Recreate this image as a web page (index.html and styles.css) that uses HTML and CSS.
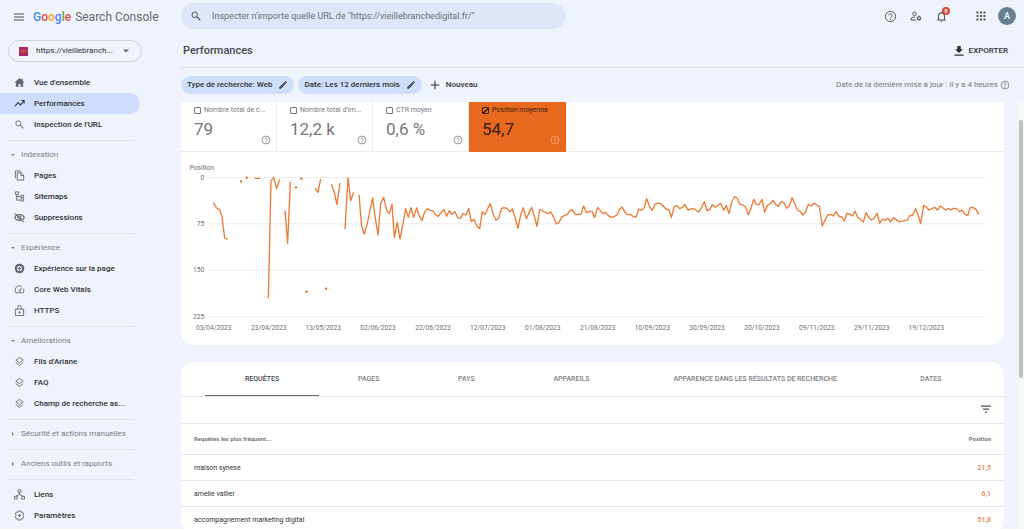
FILE: index.html
```html
<!DOCTYPE html>
<html lang="fr">
<head>
<meta charset="utf-8">
<title>Performances - Google Search Console</title>
<link rel="stylesheet" href="styles.css">
</head>
<body>
<svg class="defs" aria-hidden="true">
  <symbol id="help" viewBox="0 0 24 24"><circle cx="12" cy="12" r="9.5" fill="none" stroke="currentColor" stroke-width="1.8"/><path d="M9 10a3 3 0 1 1 4.6 2.500C12.500 13.300 12 13.800 12 15" fill="none" stroke="currentColor" stroke-width="1.8"/><circle cx="12" cy="17.500" r="1.200" fill="currentColor"/></symbol>
  <symbol id="search" viewBox="0 0 24 24"><circle cx="9.500" cy="9.500" r="5.500" fill="none" stroke="currentColor" stroke-width="2"/><path d="M14 14l6.500 6.500" stroke="currentColor" stroke-width="2.200"/></symbol>
  <symbol id="layers" viewBox="0 0 24 24"><path d="M12 3l8 6-8 6-8-6zM4 14.500l8 6 8-6" fill="none" stroke="currentColor" stroke-width="2"/></symbol>
  <symbol id="pencil" viewBox="0 0 24 24"><path fill="currentColor" d="M3 17.250V21h3.750L17.810 9.940l-3.750-3.750zM20.710 7.040a1 1 0 0 0 0-1.410l-2.340-2.340a1 1 0 0 0-1.410 0l-1.830 1.830 3.750 3.750z"/><path d="M6 18L15.500 8.500" stroke="#cfdefa" stroke-width="1"/></symbol>
</svg>

<div class="app">
  <header class="topbar">
    <div class="brand">
      <button class="icon-btn" aria-label="Menu"><svg class="i12" viewBox="0 0 24 24"><path d="M2 6h20M2 12h20M2 18h20" stroke="currentColor" stroke-width="2.200"/></svg></button>
      <a class="logo" href="#"><span class="google"><b class="c-blue">G</b><b class="c-red">o</b><b class="c-yellow">o</b><b class="c-blue">g</b><b class="c-green">l</b><b class="c-red">e</b></span><span>Search Console</span></a>
    </div>
    <div class="searchbox">
      <svg class="i12"><use href="#search"/></svg>
      <input type="text" aria-label="Inspecter une URL" placeholder='Inspecter n&#39;importe quelle URL de "https://vieillebranchedigital.fr/"'>
    </div>
    <div class="tools">
      <button class="icon-btn" aria-label="Aide"><svg class="i13"><use href="#help"/></svg></button>
      <button class="icon-btn" aria-label="Utilisateurs"><svg class="i12" viewBox="0 0 24 24" fill="none" stroke="currentColor" stroke-width="2"><circle cx="9" cy="7.500" r="3.500"/><path d="M12 20H2v-2c0-2.500 4-4 8-4"/><circle cx="18" cy="16.500" r="3" stroke-width="2.400"/><path d="M18 11.500v2M18 19.500v2M13.700 14l1.700 1M20.600 18l1.700 1M13.700 19l1.700-1M20.600 15l1.700-1"/></svg></button>
      <button class="icon-btn bell" aria-label="Notifications"><svg class="i13" viewBox="0 0 24 24"><path d="M4 18.500h16M6.500 18V11a5.500 5.500 0 0 1 11 0v7M12 3v2.500" fill="none" stroke="currentColor" stroke-width="2"/><path d="M10 20h4a2 2 0 0 1-4 0z" fill="currentColor"/></svg><span class="badge">8</span></button>
      <button class="icon-btn apps" aria-label="Applications"><svg class="i12" viewBox="0 0 24 24" fill="currentColor"><path d="M3 3h4v4H3zM10 3h4v4h-4zM17 3h4v4h-4zM3 10h4v4H3zM10 10h4v4h-4zM17 10h4v4h-4zM3 17h4v4H3zM10 17h4v4h-4zM17 17h4v4h-4z"/></svg></button>
      <button class="avatar" aria-label="Compte">A</button>
    </div>
  </header>

  <nav class="sidebar">
    <button class="property"><svg class="favicon" viewBox="0 0 24 24"><path d="M0 0h24v24H0z" fill="#fff"/><path d="M2 2h20v20H2z" fill="#a62a68"/><path d="M5 12l4-4 3 2 3-2 4 4-4 4-3-2-3 2z" fill="#e9722c"/><path d="M8 11h3v3H8zM13 11h3v3h-3z" fill="#5c1737"/></svg><span>https://vieillebranch...</span><svg class="i12" viewBox="0 0 24 24"><path d="M6 9h12l-6 6z" fill="currentColor"/></svg></button>
    <div class="group first">
      <a class="item" href="#"><svg class="i11" viewBox="0 0 24 24" fill="currentColor"><path d="M12 2L1 12h3v9h6v-6h4v6h6v-9h3l-4-3.600V4h-3v2z"/></svg>Vue d'ensemble</a>
      <a class="item active" href="#"><svg class="i11" viewBox="0 0 24 24"><path d="M2 18l7-8 5 5 8-9M16 5.500h6V12" fill="none" stroke="currentColor" stroke-width="2.400"/></svg>Performances</a>
      <a class="item" href="#"><svg class="i11"><use href="#search"/></svg>Inspection de l'URL</a>
    </div>
    <section class="group">
      <button class="heading"><svg viewBox="0 0 8 8"><path d="M0 2h8L4 6z" fill="currentColor"/></svg>Indexation</button>
      <a class="item" href="#"><svg class="i11" viewBox="0 0 24 24" fill="none" stroke="currentColor" stroke-width="2"><path d="M15 2H3v16M7 6h9l5 5v11H7zM15 6v6h6"/></svg>Pages</a>
      <a class="item" href="#"><svg class="i11" viewBox="0 0 24 24" fill="none" stroke="currentColor" stroke-width="2"><path d="M3 2h7v6H3zM15 9h6v5h-6zM15 17h6v5h-6zM6 8v12h9M6 12h9"/></svg>Sitemaps</a>
      <a class="item" href="#"><svg class="i11" viewBox="0 0 24 24" fill="none" stroke="currentColor" stroke-width="2.200"><path d="M1.500 12C5 3.500 19 3.500 22.500 12 19 20.500 5 20.500 1.500 12zM2 3l19 19"/><circle cx="12" cy="12" r="3.500"/></svg>Suppressions</a>
    </section>
    <section class="group">
      <button class="heading"><svg viewBox="0 0 8 8"><path d="M0 2h8L4 6z" fill="currentColor"/></svg>Expérience</button>
      <a class="item" href="#"><svg class="i11" viewBox="0 0 24 24"><circle cx="12" cy="12" r="8" fill="none" stroke="currentColor" stroke-width="5"/><path d="M12 8v8M8 12h8" stroke="currentColor" stroke-width="2"/></svg>Expérience sur la page</a>
      <a class="item" href="#"><svg class="i11" viewBox="0 0 24 24" fill="none" stroke="currentColor" stroke-width="2"><path d="M16 5A9.500 9.500 0 0 0 4 19h16a9.500 9.500 0 0 0 1-9"/><path d="M10 15l9-9-6 11z" fill="currentColor" stroke="none"/></svg>Core Web Vitals</a>
      <a class="item" href="#"><svg class="i11" viewBox="0 0 24 24" fill="none" stroke="currentColor" stroke-width="2"><path d="M3 9h18v14H3zM8 9V5a4 4 0 0 1 8 0v4"/><circle cx="12" cy="16" r="1.500" fill="currentColor"/></svg>HTTPS</a>
    </section>
    <section class="group">
      <button class="heading"><svg viewBox="0 0 8 8"><path d="M0 2h8L4 6z" fill="currentColor"/></svg>Améliorations</button>
      <a class="item" href="#"><svg class="i11"><use href="#layers"/></svg>Fils d'Ariane</a>
      <a class="item" href="#"><svg class="i11"><use href="#layers"/></svg>FAQ</a>
      <a class="item" href="#"><svg class="i11"><use href="#layers"/></svg>Champ de recherche as...</a>
    </section>
    <section class="group"><button class="heading"><svg viewBox="0 0 8 8"><path d="M2 0v8l4-4z" fill="currentColor"/></svg>Sécurité et actions manuelles</button></section>
    <section class="group"><button class="heading"><svg viewBox="0 0 8 8"><path d="M2 0v8l4-4z" fill="currentColor"/></svg>Anciens outils et rapports</button></section>
    <div class="group">
      <a class="item" href="#"><svg class="i11" viewBox="0 0 24 24" fill="none" stroke="currentColor" stroke-width="2"><path d="M9 2h6v6H9zM1 16h6v6H1zM17 16h6v6h-6zM12 8v5M4 16l8-4 8 4"/></svg>Liens</a>
      <a class="item" href="#"><svg class="i11" viewBox="0 0 24 24" fill="none" stroke="currentColor" stroke-width="2"><path d="M9.500 2h5l1 3 3-.7 2.700 4.400L19 12l2.200 3.300-2.700 4.400-3-.7-1 3h-5l-1-3-3 .7-2.700-4.400L5 12 2.800 8.700l2.700-4.400 3 .7z"/><circle cx="12" cy="12" r="2" fill="currentColor"/></svg>Paramètres</a>
    </div>
  </nav>

  <main class="main">
    <div class="titlebar">
      <h1>Performances</h1>
      <button class="export"><svg class="i12" viewBox="0 0 24 24"><path d="M8.500 2h7v6.500H20L12 16 4 8.500h4.500zM3 19h18v2.500H3z" fill="currentColor"/></svg>EXPORTER</button>
    </div>
    <div class="filters">
      <button class="chip">Type de recherche: Web<svg class="i10"><use href="#pencil"/></svg></button>
      <button class="chip">Date: Les 12 derniers mois<svg class="i10"><use href="#pencil"/></svg></button>
      <button class="new"><svg class="i10" viewBox="0 0 24 24"><path d="M12 2v20M2 12h20" stroke="currentColor" stroke-width="2.500"/></svg>Nouveau</button>
      <p class="updated">Date de la dernière mise à jour : il y a 4 heures<svg class="i10"><use href="#help"/></svg></p>
    </div>
    <div class="scroll">
      <div class="content">
        <section class="card report">
          <div class="metrics">
            <label class="metric"><span class="name"><input type="checkbox">Nombre total de c...</span><span class="value">79</span><svg class="i10"><use href="#help"/></svg></label>
            <label class="metric"><span class="name"><input type="checkbox">Nombre total d'im...</span><span class="value">12,2 k</span><svg class="i10"><use href="#help"/></svg></label>
            <label class="metric"><span class="name"><input type="checkbox">CTR moyen</span><span class="value">0,6 %</span><svg class="i10"><use href="#help"/></svg></label>
            <label class="metric on"><span class="name"><input type="checkbox" checked>Position moyenne</span><span class="value">54,7</span><svg class="i10"><use href="#help"/></svg></label>
          </div>
          <svg class="chart" viewBox="3 -9 2469 579" role="img" aria-label="Position moyenne par jour">
            <path class="grid" d="M82 67.500H2415M82 206.500H2415M82 345.500H2415M82 484.500H2415"/>
            <g class="ylab"><text class="axis" x="29" y="46">Position</text><text x="73" y="74">0</text><text x="73" y="213">75</text><text x="73" y="352">150</text><text x="73" y="491">225</text></g>
            <g class="xlab"><text x="101" y="525">03/04/2023</text><text x="266" y="525">23/04/2023</text><text x="430" y="525">13/05/2023</text><text x="594" y="525">02/06/2023</text><text x="759" y="525">22/06/2023</text><text x="923" y="525">12/07/2023</text><text x="1088" y="525">01/08/2023</text><text x="1253" y="525">21/08/2023</text><text x="1417" y="525">10/09/2023</text><text x="1581" y="525">30/09/2023</text><text x="1746" y="525">20/10/2023</text><text x="1910" y="525">09/11/2023</text><text x="2075" y="525">29/11/2023</text><text x="2239" y="525">19/12/2023</text></g>
            <path class="line" d="M100 142 109 159 118 163 126 184 134 249 143 253M224 70H241M265 430 273 77 281 68 290 101 299 73M315 166 323 265 331 80M405 100 414 112 422 72M454 88 463 112 471 149 480 84M495 223 504 68 512 137 521 112M537 119 545 214 553 237 562 205 570 167 578 129 586 190 594 240 602 147 611 127 620 166 628 176 636 148 643 248 652 202 660 252 669 207 677 161 685 187 693 158 701 187 710 159 718 183 726 197 734 171 742 161 750 166 759 167 767 180 775 184 783 173 792 163 800 184 808 167 816 178 825 170 833 188 841 190 849 176 858 180 866 160 874 200 882 193 890 212 899 221 907 170 915 179 923 161 931 146 940 180 948 195 956 190 964 161 972 158 981 161 989 170 997 162 1006 190 1014 219 1022 180 1030 158 1039 191 1047 173 1055 157 1063 183 1071 214 1079 164 1088 168 1104 176 1112 170 1121 187 1129 207 1137 202 1146 185 1162 178 1170 167 1178 165 1186 179 1203 177 1211 153 1220 174 1228 169 1236 169 1244 188 1253 157 1260 166 1269 176 1277 172 1285 182 1294 187 1303 184 1311 180 1318 164 1326 156 1335 172 1342 179 1351 178 1360 185 1368 187 1376 162 1384 166 1392 160 1400 131 1409 156 1417 166 1425 148 1433 144 1442 146 1450 154 1458 162 1467 165 1474 188 1482 157 1490 151 1499 161 1507 157 1515 148 1524 165 1540 160 1556 171 1565 157 1573 140 1581 167 1589 165 1597 149 1606 157 1614 151 1622 145 1631 166 1639 151 1647 176 1655 142 1663 125 1671 129 1680 148 1688 149 1697 157 1705 179 1713 160 1721 133 1729 148 1737 149 1746 133 1754 172 1762 151 1770 147 1779 136 1787 149 1795 154 1803 140 1812 143 1820 160 1828 153 1836 128 1844 145 1852 165 1860 169 1869 180 1877 171 1885 148 1894 153 1902 144 1910 150 1918 154 1927 213 1935 196 1943 180 1952 178 1960 183 1968 170 1976 183 1985 186 1993 198 2001 175 2010 178 2018 183 2025 168 2033 187 2050 201 2058 173 2066 187 2074 195 2082 190 2091 174 2099 205 2107 192 2116 196 2124 190 2132 201 2140 188 2157 200 2166 199 2174 196 2182 195 2190 181 2198 181 2207 161 2215 182 2222 206 2231 151 2239 157 2247 165 2264 157 2272 165 2281 153 2297 165 2305 160 2313 165 2321 160 2330 161 2338 170 2346 165 2355 178 2363 182 2371 157 2380 158 2388 163 2396 178"/>
            <path class="dots" d="M183 79h0M200 68h0M348 97h0M364 71h0M380 410h0M438 401h0"/>
          </svg>
        </section>

        <section class="card">
          <div class="tabs" role="tablist">
            <button role="tab" aria-selected="true">REQUÊTES</button>
            <button role="tab">PAGES</button>
            <button role="tab">PAYS</button>
            <button role="tab">APPAREILS</button>
            <button role="tab">APPARENCE DANS LES RÉSULTATS DE RECHERCHE</button>
            <button role="tab">DATES</button>
          </div>
          <div class="tablebar"><button class="icon-btn" aria-label="Filtrer"><svg class="i12" viewBox="0 0 24 24"><path d="M2 6h20M6 12h12M10 18h4" stroke="currentColor" stroke-width="2.500"/></svg></button></div>
          <table>
            <thead><tr><th>Requêtes les plus fréquent...</th><th class="num">Position</th></tr></thead>
            <tbody>
              <tr><td>maison synese</td><td class="num">21,5</td></tr>
              <tr><td>amelie vallier</td><td class="num">6,1</td></tr>
              <tr><td>accompagnement marketing digital</td><td class="num">51,8</td></tr>
            </tbody>
          </table>
        </section>
      </div>
      <div class="scrollbar" aria-hidden="true"><div class="thumb"></div></div>
    </div>
  </main>
</div>
</body>
</html>
```
FILE: styles.css
```css
* { box-sizing: border-box; }
body {
  margin: 0;
  background: #eff3fc;
  color: #303236;
  font: 500 8px/12px Roboto, "Liberation Sans", sans-serif;
}
button, input { font: inherit; color: inherit; background: none; border: 0; padding: 0; margin: 0; }
a { color: inherit; text-decoration: none; }
svg { display: block; flex: none; }
.defs { position: absolute; width: 0; height: 0; }
.i10 { width: 10px; height: 10px; }
.i11 { width: 11px; height: 11px; }
.i12 { width: 12px; height: 12px; }
.i13 { width: 13px; height: 13px; }
.icon-btn { display: flex; align-items: center; justify-content: center; color: #505357; }

.app {
  display: grid;
  grid-template: 32px minmax(0, 1fr) / 181px minmax(0, 1fr);
  height: 100vh;
  overflow: hidden;
}

/* top bar */
.topbar { grid-column: 1 / 3; display: flex; align-items: center; padding-right: 8px; }
.brand { width: 181px; flex: none; display: flex; align-items: center; gap: 8px; padding: 2px 0 0 13px; }
.logo { display: flex; gap: 4px; font: 400 12px/16px Roboto, sans-serif; color: #66696d; white-space: nowrap; }
.google b { font-weight: 500; }
.c-blue { color: #4a86ee; }
.c-red { color: #e8503f; }
.c-yellow { color: #f5a52b; }
.c-green { color: #5a9e5f; }
.searchbox {
  flex: 0 1 385px;
  height: 26px;
  display: flex;
  align-items: center;
  gap: 10px;
  padding: 0 9px;
  border-radius: 13px;
  background: #dde7f9;
  color: #505357;
}
.searchbox input { flex: 1; min-width: 0; font-weight: 400; font-size: 9px; outline: 0; }
.searchbox input::placeholder { color: #6b7077; opacity: 1; }
.tools { margin-left: auto; display: flex; align-items: center; gap: 13px; }
.bell { position: relative; }
.apps { margin: 0 -2px 0 14px; }
.badge {
  position: absolute;
  top: -3px;
  right: -2px;
  width: 8px;
  height: 8px;
  border-radius: 50%;
  background: #db4437;
  color: #fff;
  font-size: 6px;
  line-height: 8px;
  text-align: center;
}
.avatar { width: 18px; height: 18px; border-radius: 50%; background: #668091; color: #fff; font-size: 9px; line-height: 18px; }

/* sidebar */
.sidebar { overflow: hidden; padding-top: 8px; }
.property {
  width: 134px;
  height: 22px;
  margin-left: 8px;
  display: flex;
  align-items: center;
  gap: 7px;
  padding: 0 9px;
  border: 1px solid #cfd1d6;
  border-radius: 11px;
  font-weight: 400;
}
.property span { flex: 1; text-align: left; }
.property .i12 { color: #66696d; }
.favicon { width: 11px; height: 11px; }
.group { margin-left: 8px; width: 126px; border-top: 1px solid #dfe3ea; padding: 4px 0 5px; }
.group:has(.heading) { padding-top: 4px; }
.group:has(.item) { padding-bottom: 5px; }
.group.first { border: 0; padding-top: 10px; }
.heading { height: 20px; display: flex; align-items: center; gap: 6px; padding-left: 3px; color: #7b7e83; font-weight: 400; white-space: nowrap; }
.heading svg { width: 4px; height: 4px; }
.item {
  height: 21px;
  margin-left: -8px;
  width: 140px;
  display: flex;
  align-items: center;
  gap: 9px;
  padding-left: 14px;
  border-radius: 0 11px 11px 0;
  white-space: nowrap;
}
.item svg { color: #66696d; }
.item.active { background: #cdddfb; }
.item.active svg { color: #303236; }

/* page head */
.main { display: flex; flex-direction: column; min-width: 0; }
.titlebar { height: 36px; flex: none; display: flex; align-items: center; justify-content: space-between; padding: 2px 16px 0 2px; border-bottom: 1px solid #dde1ea; }
h1 { margin: 0; font: 500 11px/16px Roboto, sans-serif; color: #45484c; }
.export { display: flex; align-items: center; gap: 4px; }
.filters { height: 34px; flex: none; display: flex; align-items: center; gap: 4px; padding-right: 14px; white-space: nowrap; }
.chip { height: 18px; display: flex; align-items: center; gap: 6px; padding: 0 6px; border-radius: 9px; background: #cfdefa; }
.new { display: flex; align-items: center; gap: 6px; margin-left: 4px; }
.updated { display: flex; align-items: center; gap: 2px; margin: 0 0 0 auto; font-weight: 400; color: #75787d; }

/* scrolling area */
.scroll { flex: 1; min-height: 0; display: flex; justify-content: space-between; overflow: hidden; }
.content { flex: 1; min-width: 0; margin-right: 14px; display: flex; flex-direction: column; gap: 17px; }
.scrollbar { width: 6px; flex: none; padding: 18px 1px 0; background: #f8f8f9; }
.thumb { height: 63%; border-radius: 2px; background: #c1c1c1; }
.card { flex: none; background: #fff; border-radius: 13px; }
.report { border-radius: 0 0 13px 13px; }

.metrics { display: flex; border-bottom: 1px solid #ebebed; }
.metric { width: 96px; height: 49px; position: relative; padding: 2px 4px 0 13px; border-right: 1px solid #ebebed; color: #75787d; }
.metric.on { width: 97px; height: 50px; margin-bottom: -1px; border: 0; background: #e8681e; color: #33210f; }
.metric .name { display: flex; align-items: center; gap: 3px; font: 400 7px/12px Roboto, sans-serif; white-space: nowrap; }
.metric .value { display: block; margin-top: 3px; font: 400 17px/20px Roboto, sans-serif; }
.metric > svg { position: absolute; right: 5px; bottom: 6px; }
.metric.on > svg { right: 6px; bottom: 7px; color: #f6b48f; }
.metric input { appearance: none; width: 7px; height: 7px; border: 1px solid currentColor; border-radius: 1px; }
.metric input:checked { background: linear-gradient(135deg, transparent 45%, currentColor 45% 60%, transparent 60%); }

.chart { width: 100%; height: auto; font: 400 20px Roboto, sans-serif; fill: #6b6e73; }
.chart .ylab { text-anchor: end; }
.chart .axis { text-anchor: start; }
.chart .xlab { text-anchor: middle; }
.grid { stroke: #ececee; stroke-width: 3; fill: none; }
.line { stroke: #ee7a35; stroke-width: 4; stroke-linejoin: round; fill: none; }
.dots { stroke: #e8681e; stroke-width: 7; stroke-linecap: round; }

/* table card */
.tabs { display: grid; grid-template-columns: 114fr 99fr 96fr 114fr 253fr 98fr; padding: 0 24px; border-bottom: 1px solid #e6e6e8; }
.tabs button { height: 34px; border-bottom: 1px solid transparent; color: #7b7e83; font-size: 7px; white-space: nowrap; }
.tabs [aria-selected="true"] { color: #45484c; border-color: #66696d; }
.tablebar { height: 26px; display: flex; justify-content: flex-end; align-items: center; padding: 0 12px 3px; }
table { width: 100%; border-collapse: collapse; font-size: 7px; }
th, td { height: 26px; padding: 0 13px; text-align: left; border-top: 1px solid #e6e6e8; font-weight: 400; }
th { height: 31px; font-size: 6px; font-weight: 700; color: #75787d; }
th.num, td.num { text-align: right; }
td.num { color: #ec7d42; font-weight: 500; }
```
